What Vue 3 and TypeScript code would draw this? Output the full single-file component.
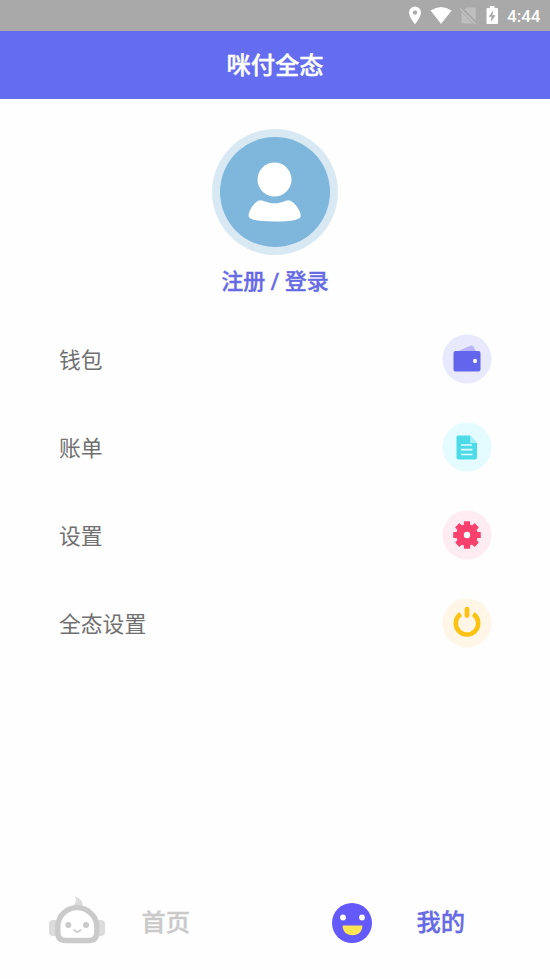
<script setup lang="ts">
type IconName = 'wallet' | 'bill' | 'gear' | 'power'

interface MenuItem {
  label: string
  icon: IconName
}

const items: MenuItem[] = [
  { label: '钱包', icon: 'wallet' },
  { label: '账单', icon: 'bill' },
  { label: '设置', icon: 'gear' },
  { label: '全态设置', icon: 'power' },
]

const teeth: number[] = [0, 45, 90, 135, 180, 225, 270, 315]
</script>

<template>
  <div class="screen">
    <div class="status">
      <svg class="status-icons" viewBox="0 0 96 30" width="96" height="30">
        <path fill="#fff" fill-rule="evenodd" d="M10 6.500a6 6 0 0 0-6 6c0 4.500 6 11.800 6 11.800s6-7.300 6-11.800a6 6 0 0 0-6-6zm0 3.900a2.200 2.200 0 1 1 0 4.400a2.200 2.200 0 0 1 0-4.400z" />
        <path fill="#fff" d="M25.600 10.500Q36 3.500 46.600 10.500L36.100 24z" />
        <path fill="#bebebe" d="M61.500 7.500H69.500q1.200 0 1.200 1.200V20.500L59.300 9.300zM56.500 12L68 23.500H57.700q-1.200 0-1.200-1.200z" />
        <path d="M55 8.500L70.500 24" stroke="#c4c4c4" stroke-width="1.300" />
        <path d="M56.700 8L71.500 22.800" stroke="#a9a9a9" stroke-width="1.300" />
        <path fill="#fff" fill-rule="evenodd" d="M84.800 6h4.700v2H92q1 0 1 1v14q0 1-1 1h-9.500q-1 0-1-1V9q0-1 1-1h2.300zM88.300 10.500l-4.800 6.300h3l-.8 5.200l5-6.800h-3.200z" />
      </svg>
      <span class="clock">4:44</span>
    </div>

    <header class="header">咪付全态</header>

    <section class="profile">
      <svg class="avatar" viewBox="0 0 126 126" width="126" height="126">
        <circle cx="63" cy="63" r="63" fill="#d9e9f4" />
        <circle cx="63" cy="63" r="55" fill="#7eb6dc" />
        <circle cx="62.500" cy="50.500" r="17" fill="#fff" />
        <path fill="#fff" d="M48.500 71.200C52 71.200 54.500 74.300 62.500 74.300S73 71.200 76.500 71.200C81.500 71.200 88.800 81 88.800 87Q88.800 92.500 62.700 92.500Q36.600 92.500 36.600 87C36.600 81 43.500 71.200 48.500 71.200z" />
      </svg>
      <div class="login">注册 / 登录</div>
    </section>

    <ul class="menu">
      <li v-for="item in items" :key="item.icon" class="row">
        <span class="label">{{ item.label }}</span>
        <svg viewBox="0 0 50 50" width="50" height="50">
          <g v-if="item.icon === 'wallet'">
            <circle cx="25" cy="25" r="24.500" fill="#e9e9fe" />
            <path d="M14 18L29 11.600Q30.500 11 31.200 12.300L34.500 18z" fill="#b8b6fa" />
            <rect x="11.500" y="17" width="27" height="20.500" rx="2" fill="#6366ec" />
            <ellipse cx="33" cy="27" rx="2" ry="2.300" fill="#fff" />
          </g>
          <g v-else-if="item.icon === 'bill'">
            <circle cx="25" cy="25" r="24.500" fill="#e4fbff" />
            <path d="M16 13.500h12.500V20q0 1 1 1H35v14.500q0 2-2 2H16.500q-2 0-2-2V15q0-1.500 1.500-1.500z" fill="#4ddbe7" />
            <path d="M28.500 13.500L35 20.500V21H29.500q-1 0-1-1z" fill="#a4eff4" />
            <path d="M19 23h11M19 27.700h11.500M19 32.500h11.500" stroke="#e4fbff" stroke-width="1.700" />
          </g>
          <g v-else-if="item.icon === 'gear'">
            <circle cx="25" cy="25" r="24.500" fill="#ffebf2" />
            <g fill="#fa416d">
              <circle cx="25" cy="25" r="10.800" />
              <rect v-for="angle in teeth" :key="angle" x="21.900" y="11.200" width="6.200" height="7" rx="0.700" :transform="`rotate(${angle} 25 25)`" />
            </g>
            <circle cx="25" cy="25" r="3.200" fill="#fff" />
          </g>
          <g v-else>
            <circle cx="25" cy="25" r="24.500" fill="#fff6e7" />
            <path d="M18.800 16A11.200 11.200 0 1 0 31.200 16" fill="none" stroke="#fcc314" stroke-width="4.600" />
            <path d="M25 11.200V17.500" stroke="#fcc314" stroke-width="4.800" stroke-linecap="round" />
          </g>
        </svg>
      </li>
    </ul>

    <nav class="tabs">
      <div class="tab home">
        <svg viewBox="0 0 58 50" width="58" height="50">
          <path fill="#dcdcdc" d="M27 1.500C32.500 3 35.500 7 34.500 12H23C27.500 10 29 6 27 1.500z" />
          <rect x="1" y="25" width="12" height="16" rx="4" fill="#dcdcdc" />
          <rect x="45" y="25" width="12" height="16" rx="4" fill="#dcdcdc" />
          <path d="M29 12.600C18.500 12.600 9.800 21 9.800 32V37.500Q9.800 45.500 17.800 45.500H40.800Q48.800 45.500 48.800 37.500V32C48.800 21 39.500 12.600 29 12.600z" fill="#fff" stroke="#cacaca" stroke-width="5.400" />
          <circle cx="20.300" cy="30" r="3" fill="#cacaca" />
          <circle cx="38" cy="30" r="3" fill="#cacaca" />
          <path d="M25.800 34.500Q29.300 39.500 33 34.500" fill="none" stroke="#cacaca" stroke-width="1.800" />
        </svg>
        <span>首页</span>
      </div>
      <div class="tab mine">
        <svg viewBox="0 0 40 40" width="40" height="40">
          <circle cx="20" cy="20" r="20" fill="#6459fa" />
          <circle cx="11" cy="14.500" r="2.900" fill="#fff" />
          <circle cx="30" cy="14.500" r="2.900" fill="#fff" />
          <path d="M10.600 22.500H30.400C30.400 28.500 26.500 32.300 20.500 32.300S10.600 28.500 10.600 22.500z" fill="#ffe552" />
        </svg>
        <span>我的</span>
      </div>
    </nav>
  </div>
</template>

<style>
body {
  background: #fff;
}
</style>

<style scoped>
.screen {
  width: 550px;
  height: 979px;
  display: flex;
  flex-direction: column;
  overflow: hidden;
  background: #fefefe;
  font-family: Roboto, "Noto Sans CJK SC", sans-serif;
}

.status {
  display: flex;
  flex: none;
  height: 30.500px;
  padding-left: 405px;
  background: #a9a9a9;
}

.status-icons {
  flex: none;
}

.clock {
  margin-left: 6px;
  color: #fff;
  font-size: 17px;
  font-weight: 500;
  line-height: 33px;
}

.header {
  flex: none;
  height: 68.500px;
  background: #646cf0;
  color: #fff;
  font-size: 24.300px;
  font-weight: 500;
  line-height: 70px;
  text-align: center;
  -webkit-text-stroke: 0.350px currentColor;
}

.profile {
  display: flex;
  flex: none;
  flex-direction: column;
  align-items: center;
  height: 216px;
  padding-top: 29.500px;
  box-sizing: border-box;
}

.avatar {
  flex: none;
}

.login {
  margin-top: 10px;
  color: #666ae5;
  font-size: 22px;
  font-weight: 500;
  line-height: 34px;
  -webkit-text-stroke: 0.350px currentColor;
}

.menu {
  flex: none;
  margin: 0;
  padding: 0 58px 0 59px;
  list-style: none;
}

.row {
  display: flex;
  align-items: center;
  justify-content: space-between;
  height: 88px;
  color: #707070;
  font-size: 21.800px;
}

.label {
  padding-bottom: 2px;
}

.tabs {
  display: flex;
  flex: none;
  height: 50px;
  margin-top: 228px;
}

.tab {
  display: flex;
  box-sizing: border-box;
  width: 50%;
  font-size: 24.300px;
  font-weight: 500;
  line-height: 55px;
  -webkit-text-stroke: 0.350px currentColor;
}

.home {
  gap: 35.500px;
  padding-left: 48px;
  color: #c9c9c9;
}

.mine {
  gap: 44.500px;
  padding-left: 57px;
  color: #666ae5;
}

.tab svg {
  flex: none;
}

.mine svg {
  margin-top: 8px;
}
</style>
